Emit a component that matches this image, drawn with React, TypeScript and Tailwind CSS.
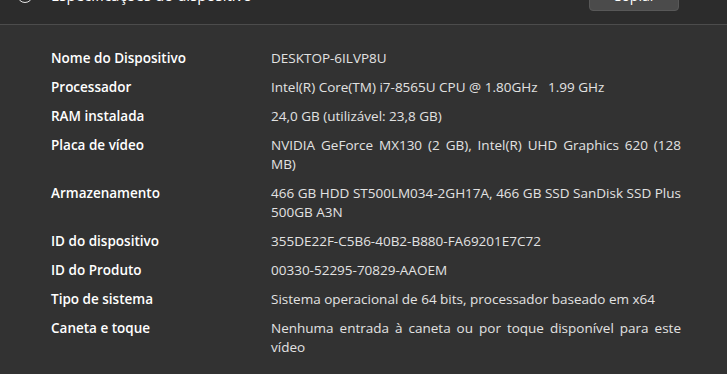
import React from "react";

const rows: [string, string][] = [
  ["Nome do Dispositivo", "DESKTOP-6ILVP8U"],
  ["Processador", "Intel(R) Core(TM) i7-8565U CPU @ 1.80GHz\u00a0\u00a0\u00a01.99 GHz"],
  ["RAM instalada", "24,0 GB (utilizável: 23,8 GB)"],
  ["Placa de vídeo", "NVIDIA GeForce MX130 (2 GB), Intel(R) UHD Graphics 620 (128 MB)"],
  ["Armazenamento", "466 GB HDD ST500LM034-2GH17A, 466 GB SSD SanDisk SSD Plus 500GB A3N"],
  ["ID do dispositivo", "355DE22F-C5B6-40B2-B880-FA69201E7C72"],
  ["ID do Produto", "00330-52295-70829-AAOEM"],
  ["Tipo de sistema", "Sistema operacional de 64 bits, processador baseado em x64"],
  ["Caneta e toque", "Nenhuma entrada à caneta ou por toque disponível para este vídeo"],
];

export default function App() {
  return (
    <div
      className="w-[727px] h-[374px] overflow-hidden bg-[#323232]"
      style={{ fontFamily: '"Open Sans", "Noto Sans", sans-serif' }}
    >
      <div className="-mt-[34px]">
        <div className="h-[58px] bg-[#2c2c2c] flex items-center pl-[17px] pr-[48px]">
          <div className="w-[16px] h-[16px] rounded-full border-[1.5px] border-[#e8e8e8]" />
          <span className="ml-[18px] text-[15px] text-white">Especificações do dispositivo</span>
          <div className="flex-1" />
          <button className="w-[90px] h-[32px] rounded-[4px] bg-[#4b4b4b] border border-[#585858] text-[14px] text-white">
            Copiar
          </button>
        </div>
        <div className="h-[1px] bg-[#4c4c4c]" />
        <div className="pt-[24px] pl-[51px] flex flex-col gap-[10px]">
          {rows.map(([k, v]) => (
            <div key={k} className="flex text-[13.5px] leading-[19px]">
              <div className="w-[220px] font-semibold text-white">{k}</div>
              <div className="w-[410px] text-justify text-[#e2e2e2]">{v}</div>
            </div>
          ))}
        </div>
      </div>
    </div>
  );
}
